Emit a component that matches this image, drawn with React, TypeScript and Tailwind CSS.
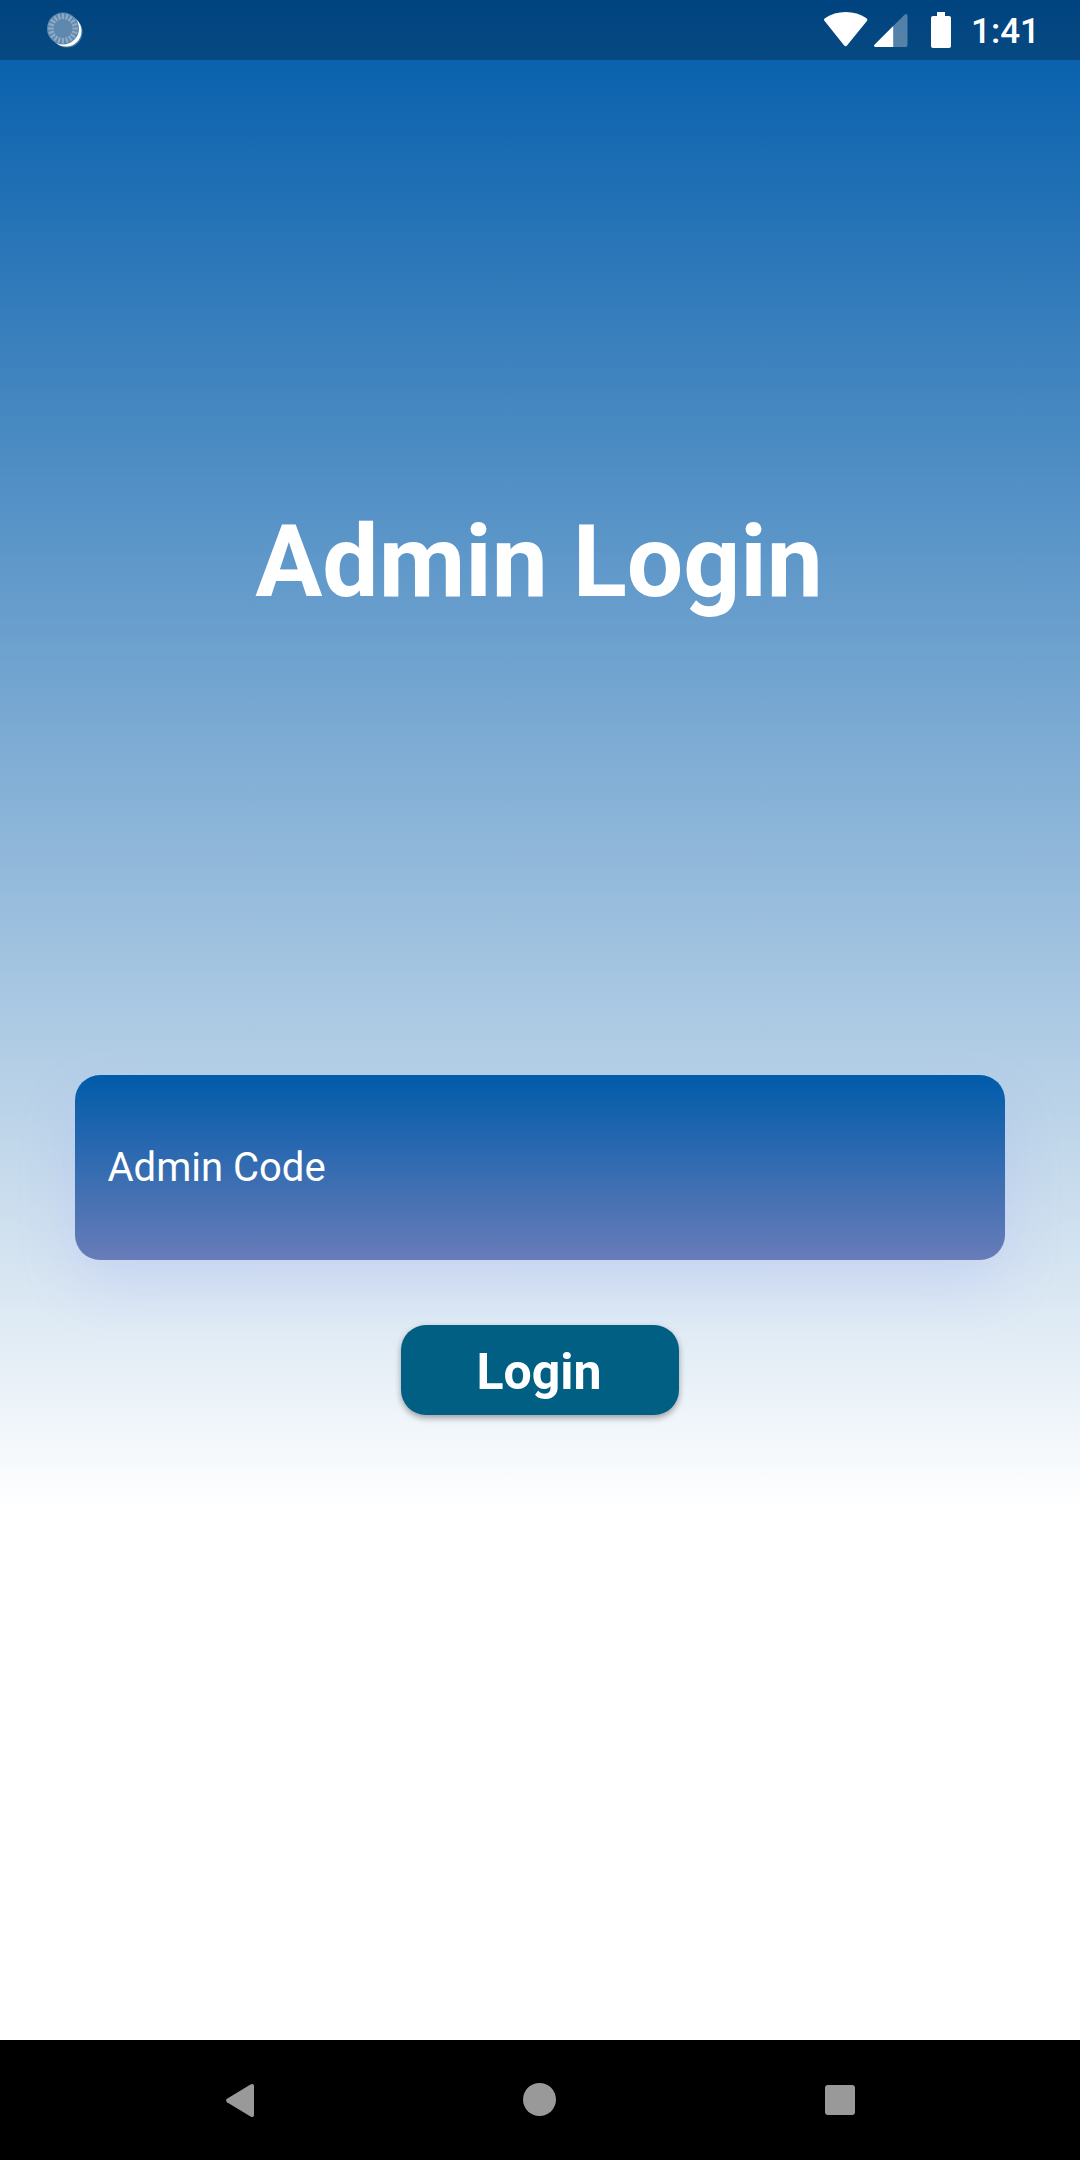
import React from "react";

function Notification() {
  const ticks = Array.from({ length: 20 }, (_, i) => i * 18);
  return (
    <svg width="40" height="40" viewBox="0 0 40 40">
      <circle cx="21" cy="20" r="15.5" fill="#fff" fillOpacity="0.3" />
      <circle cx="20" cy="19" r="15.5" fill="#fff" />
      <circle cx="17" cy="16.5" r="16" fill="#5e88ae" />
      {ticks.map((a) => (
        <path key={a} d="M17 1.500v5.500" stroke="#8eabc6" strokeWidth="2.200" transform={`rotate(${a} 17 16.5)`} />
      ))}
    </svg>
  );
}

function StatusBar() {
  return (
    <header className="flex h-[60px] items-start justify-between bg-black/25 pl-[46px] pr-[40px]">
      <div className="pt-[12px]">
        <Notification />
      </div>
      <div className="flex items-start">
        <svg className="mt-[12px]" width="44" height="35" viewBox="0 0 44 35">
          <path d="M.8 9.2C-.3 8.200-.2 7 .9 6.200C7 2 14 0 21.700 0S36.500 2 42.500 6.200c1.100.8 1.200 2 .2 3L23.200 33.300c-1 1.200-2.200 1.200-3.200 0Z" fill="#fff" />
        </svg>
        <svg className="ml-[6px] mt-[14px]" width="34" height="33" viewBox="0 0 34 33">
          <path d="M30.500.8C32 -.6 33.500 0 33.500 2V31c0 1.300-.7 2-2 2H19V12.300Z" fill="#fff" fillOpacity="0.32" />
          <path d="M19.200 12V33H1.500C-.2 33-.4 31.500.7 30.400Z" fill="#fff" />
        </svg>
        <svg className="ml-[23px] mt-[12px]" width="20" height="36" viewBox="0 0 20 36">
          <path d="M6 0h8v4h4q2 0 2 2v28q0 2-2 2H2q-2 0-2-2V6q0-2 2-2h4Z" fill="#fff" />
        </svg>
        <span className="ml-[20px] mt-[11px] text-[35px] font-medium leading-[41px]">1:41</span>
      </div>
    </header>
  );
}

function NavigationBar() {
  return (
    <nav className="grid h-[120px] grid-cols-[240px_300px_300px_240px] bg-black">
      <svg className="ml-[226px] mt-[43.5px]" width="28" height="33" viewBox="0 0 28 33">
        <path d="M1 14.800 24.500.5Q28-1 28 2V31Q28 34 24.500 32.500L1 18.200Q-.8 16.500 1 14.800Z" fill="#999" />
      </svg>
      <div className="ml-[283px] mt-[43px] size-[33px] rounded-full bg-[#999]" />
      <div className="ml-[285px] mt-[45px] size-[30px] rounded-[3px] bg-[#999]" />
    </nav>
  );
}

export default function App() {
  return (
    <div className="flex h-[2160px] w-[1080px] flex-col overflow-hidden bg-white bg-[linear-gradient(#005baa_0px,#fff_1512px)] font-['Roboto',sans-serif] text-white">
      <StatusBar />
      <main className="flex flex-1 flex-col items-center">
        <h1 className="mt-[443px] pr-[2px] text-[100px] font-bold leading-[117px]">Admin Login</h1>
        <div className="mt-[455px] flex h-[185px] w-[930px] items-center rounded-[25px] bg-[linear-gradient(#005baa,#687cb8)] px-[32.5px] shadow-[0_25px_59px_rgba(143,148,251,0.2)]">
          <input
            type="text"
            placeholder="Admin Code"
            className="w-full bg-transparent text-[40px] leading-[47px] outline-none placeholder:text-white placeholder:opacity-100"
          />
        </div>
        <button className="mt-[65px] h-[90px] w-[278px] rounded-[25px] bg-[#005f83] pr-[2px] pt-[5px] text-[50px] font-bold leading-[59px] shadow-[0_3px_6px_rgba(0,0,0,0.35)]">
          Login
        </button>
      </main>
      <NavigationBar />
    </div>
  );
}
